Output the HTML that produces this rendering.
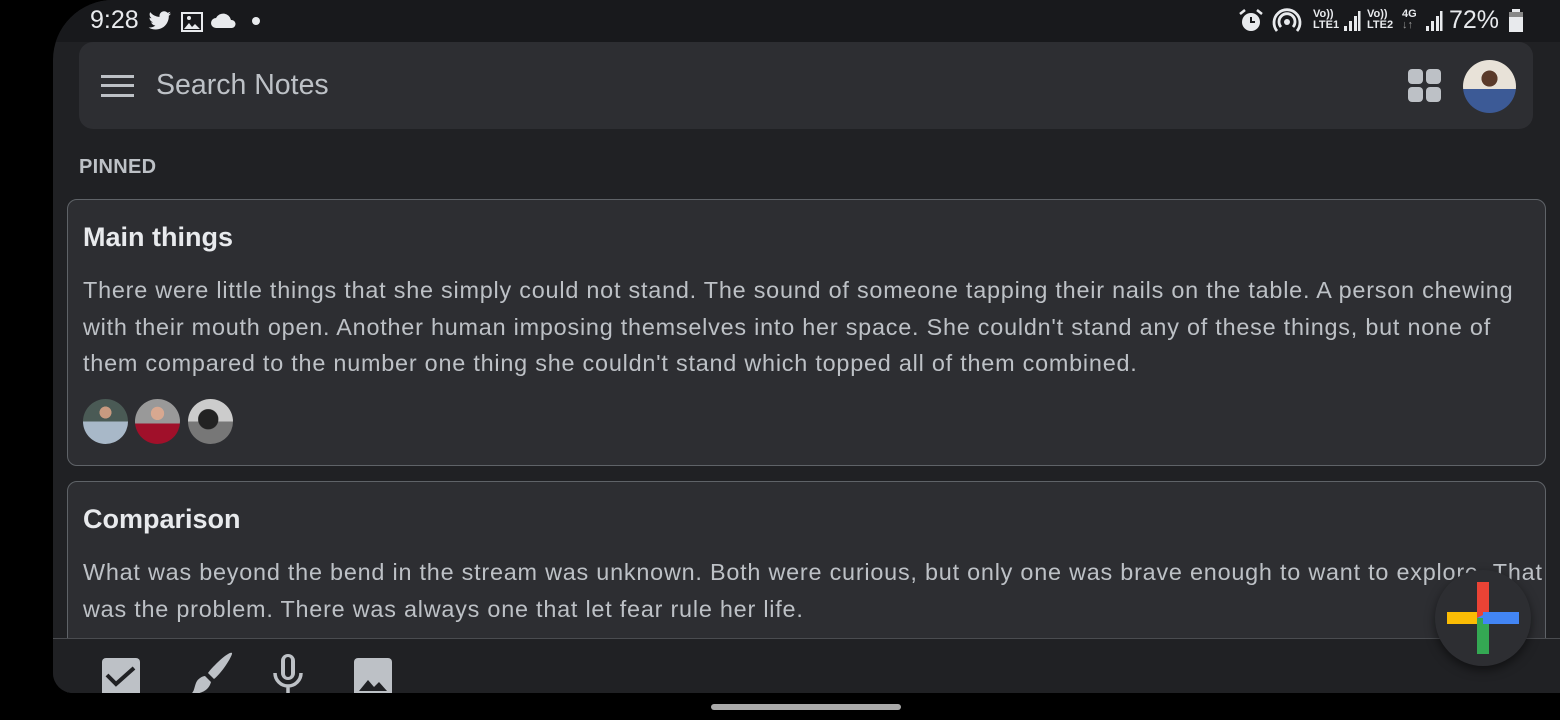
<!DOCTYPE html>
<html><head><meta charset="utf-8"><style>
*{margin:0;padding:0;box-sizing:border-box}
body{width:1560px;height:720px;background:#000;overflow:hidden;font-family:"Liberation Sans",Roboto,sans-serif;position:relative}
.app{position:absolute;left:53px;top:0;width:1507px;height:693px;background:#202124;border-top-left-radius:60px;border-bottom-left-radius:20px;overflow:hidden}
.status{position:absolute;left:0;top:0;width:100%;height:42px;background:#18191c}
.st{position:absolute;color:#e8eaed;font-size:25px;top:6px}
.search{position:absolute;left:26px;top:42px;width:1454px;height:87px;background:#2d2e32;border-radius:14px}
.pinned{position:absolute;left:26px;top:156px;color:#bdc1c6;font-size:20px;font-weight:bold;letter-spacing:.3px}
.card{position:absolute;left:14px;width:1479px;background:#2d2e32;border:1.5px solid #5f6368;border-radius:10px}
.card h2{position:absolute;left:15px;top:22px;font-size:27px;font-weight:bold;color:#e8eaed}
.card p{position:absolute;left:15px;top:72px;white-space:nowrap;font-size:23.4px;line-height:36.5px;color:#bdc1c6;letter-spacing:.78px}
.av{position:absolute;top:199px;width:45px;height:45px;border-radius:50%}
.bottom{position:absolute;left:0;top:638px;width:100%;height:60px;background:#202124;border-top:1.5px solid #4a4c50}
.fab{position:absolute;left:1382px;top:570px;width:96px;height:96px;border-radius:50%;background:#2d2e32;box-shadow:0 4px 10px rgba(0,0,0,.5)}
</style></head><body>
<div class="app">
 <div class="status">
  <div class="st" style="left:37px">9:28</div>
  <svg style="position:absolute;left:95px;top:10px" width="24" height="22" viewBox="0 0 24 20"><path fill="#e8eaed" d="M23 2.5c-.8.4-1.7.6-2.6.7.9-.6 1.600-1.400 2-2.500-.9.5-1.900.9-2.900 1.100C18.6.9 17.4.3 16.1.3c-2.5 0-4.6 2-4.6 4.6 0 .4 0 .7.1 1C7.8 5.7 4.4 3.9 2.2 1.1c-.4.7-.6 1.5-.6 2.3 0 1.6.8 3 2 3.8-.8 0-1.5-.2-2.1-.6v.1c0 2.2 1.6 4.1 3.7 4.5-.4.1-.8.2-1.2.2-.3 0-.6 0-.9-.1.6 1.8 2.3 3.2 4.3 3.200-1.600 1.200-3.600 2-5.700 2H.6c2 1.3 4.5 2 7.1 2 8.5 0 13.1-7 13.1-13.1v-.6c.9-.6 1.6-1.4 2.2-2.3z"/></svg>
  <svg style="position:absolute;left:128px;top:12px" width="22" height="20" viewBox="0 0 22 20"><rect x="1" y="1" width="20" height="18" fill="none" stroke="#e8eaed" stroke-width="2"/><path fill="#e8eaed" d="M3 17l5-6 3 4 3-3 5 5z"/><circle cx="8" cy="6" r="2" fill="#e8eaed"/></svg>
  <svg style="position:absolute;left:158px;top:12px" width="26" height="16" viewBox="0 0 26 16"><path fill="#e8eaed" d="M5 16a5 5 0 0 1 0-10 8 8 0 0 1 15 2 4 4 0 0 1 1 8z"/></svg>
  <div style="position:absolute;left:199px;top:17px;width:8px;height:8px;border-radius:50%;background:#e8eaed"></div>
  <svg style="position:absolute;left:1185px;top:8px" width="26" height="26" viewBox="0 0 26 26"><circle cx="13" cy="14" r="9" fill="#e8eaed"/><path d="M13 9v5h4" stroke="#18191c" stroke-width="2" fill="none"/><path d="M2 6l5-4M24 6l-5-4" stroke="#e8eaed" stroke-width="2.5"/></svg>
  <svg style="position:absolute;left:1219px;top:8px" width="30" height="26" viewBox="0 0 30 26"><circle cx="15" cy="14" r="3" fill="#e8eaed"/><path d="M9 19a8 8 0 1 1 12 0M5 23a13 13 0 1 1 20 0" stroke="#e8eaed" stroke-width="2.8" fill="none"/></svg>
  <div style="position:absolute;left:1260px;top:9px;color:#e8eaed;font-size:11px;line-height:11px;font-weight:bold">Vo))<br>LTE1</div>
  <svg style="position:absolute;left:1290px;top:10px" width="18" height="22"><rect x="1" y="16" width="3" height="5" fill="#e8eaed"/><rect x="6" y="11" width="3" height="10" fill="#e8eaed"/><rect x="11" y="6" width="3" height="15" fill="#e8eaed"/><rect x="15" y="1" width="2.5" height="20" fill="#e8eaed"/></svg>
  <div style="position:absolute;left:1314px;top:9px;color:#e8eaed;font-size:11px;line-height:11px;font-weight:bold">Vo))<br>LTE2</div>
  <div style="position:absolute;left:1349px;top:9px;color:#e8eaed;font-size:11px;line-height:11px;font-weight:bold">4G<br><span style="color:#999">↓↑</span></div>
  <svg style="position:absolute;left:1372px;top:10px" width="18" height="22"><rect x="1" y="16" width="3" height="5" fill="#e8eaed"/><rect x="6" y="11" width="3" height="10" fill="#e8eaed"/><rect x="11" y="6" width="3" height="15" fill="#e8eaed"/><rect x="15" y="1" width="2.5" height="20" fill="#e8eaed"/></svg>
  <div class="st" style="left:1396px">72%</div>
  <svg style="position:absolute;left:1455px;top:9px" width="16" height="24"><rect x="4" y="0" width="8" height="3" fill="#e8eaed"/><rect x="1" y="3" width="14" height="20" fill="#888"/><rect x="1" y="8" width="14" height="15" fill="#e8eaed"/></svg>
 </div>
 <div class="search">
  <svg style="position:absolute;left:22px;top:32px" width="33" height="24"><rect y="1" width="33" height="3" fill="#bdc1c6"/><rect y="10" width="33" height="3" fill="#bdc1c6"/><rect y="20" width="33" height="3" fill="#bdc1c6"/></svg>
  <div style="position:absolute;left:77px;top:27px;font-size:28.5px;color:#bdc1c6">Search Notes</div>
  <svg style="position:absolute;left:1329px;top:27px" width="34" height="34"><rect x="0" y="0" width="15" height="15" rx="4" fill="#bdc1c6"/><rect x="18" y="0" width="15" height="15" rx="4" fill="#bdc1c6"/><rect x="0" y="18" width="15" height="15" rx="4" fill="#bdc1c6"/><rect x="18" y="18" width="15" height="15" rx="4" fill="#bdc1c6"/></svg>
  <div style="position:absolute;left:1384px;top:18px;width:53px;height:53px;border-radius:50%;background:radial-gradient(circle at 50% 35%,#5a3a2a 0 18%,transparent 19%),linear-gradient(#e8e2d8 0 55%,#3c5a96 55%);"></div>
 </div>
 <div class="pinned">PINNED</div>
 <div class="card" style="top:199px;height:267px">
  <h2>Main things</h2>
  <p>There were little things that she simply could not stand. The sound of someone tapping their nails on the table. A person chewing<br>with their mouth open. Another human imposing themselves into her space. She couldn't stand any of these things, but none of<br>them compared to the number one thing she couldn't stand which topped all of them combined.</p>
  <div class="av" style="left:15px;background:radial-gradient(circle at 50% 30%,#c89a80 0 15%,transparent 16%),linear-gradient(#4a5a55 0 50%,#a8b8c8 50%)"></div>
  <div class="av" style="left:67px;background:radial-gradient(circle at 50% 32%,#d8a890 0 17%,transparent 18%),linear-gradient(#999 0 55%,#a0102a 55%)"></div>
  <div class="av" style="left:120px;background:radial-gradient(circle at 45% 45%,#222 0 28%,transparent 30%),linear-gradient(#ccc 0 50%,#777 50%)"></div>
 </div>
 <div class="card" style="top:481px;height:220px">
  <h2>Comparison</h2>
  <p>What was beyond the bend in the stream was unknown. Both were curious, but only one was brave enough to want to explore. That<br>was the problem. There was always one that let fear rule her life.</p>
 </div>
 <div class="bottom">
  <svg style="position:absolute;left:49px;top:19px" width="38" height="40"><rect width="38" height="40" rx="4" fill="#bdc1c6"/><path d="M5 17l9 9 18-16" stroke="#202124" stroke-width="4" fill="none"/></svg>
  <svg style="position:absolute;left:133px;top:12px" width="48" height="46"><path d="M46 2c1 2-10 20-18 26l-6-6C28 14 43 0 46 2zM19 25l6 6c-2 8-9 12-20 12 4-3 3-8 6-13 2-3 6-5 8-5z" fill="#bdc1c6"/></svg>
  <svg style="position:absolute;left:219px;top:15px" width="32" height="42"><rect x="9" y="0" width="14" height="26" rx="7" fill="#bdc1c6"/><rect x="13" y="3" width="6" height="20" rx="3" fill="#202124"/><path d="M3 19a13 13 0 0 0 26 0M16 32v10" stroke="#bdc1c6" stroke-width="3.5" fill="none"/></svg>
  <svg style="position:absolute;left:301px;top:19px" width="38" height="40"><rect width="38" height="40" rx="4" fill="#bdc1c6"/><path d="M5 33l9-11 6 7 5-5 8 9z" fill="#202124"/></svg>
 </div>
 <div class="fab">
  <svg style="position:absolute;left:12px;top:12px" width="72" height="72" viewBox="0 0 72 72"><rect x="30" y="0" width="12" height="36" fill="#ea4335"/><rect x="0" y="30" width="30" height="12" fill="#fbbc04"/><rect x="30" y="36" width="12" height="36" fill="#34a853"/><rect x="36" y="30" width="36" height="12" fill="#4285f4"/><path d="M30 36l12-6v6z" fill="#4285f4"/></svg>
 </div>
</div>
<div style="position:absolute;left:711px;top:704px;width:190px;height:6px;border-radius:3px;background:#aaa"></div>
</body></html>
